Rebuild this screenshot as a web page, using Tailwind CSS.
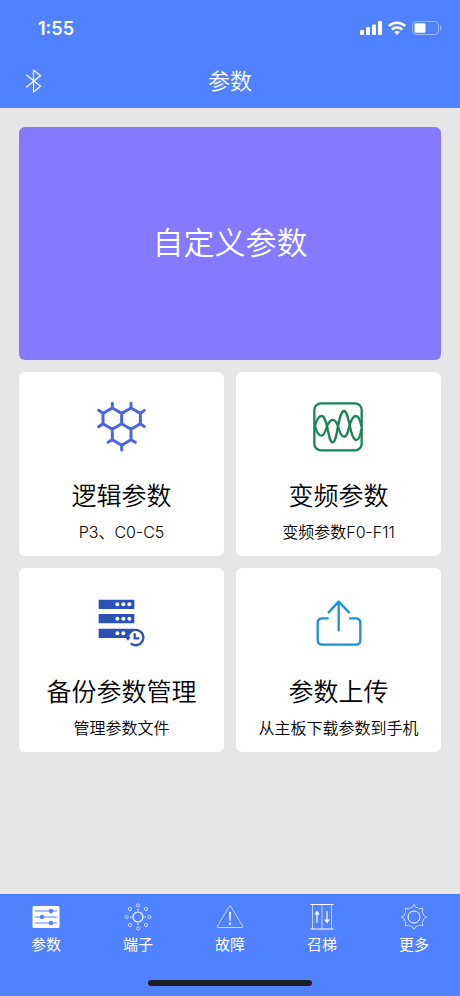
<!DOCTYPE html>
<html lang="zh-CN">
<head>
    <meta charset="UTF-8">
    <meta name="viewport" content="width=device-width, initial-scale=1">
    <title>参数</title>
    <script src="https://cdn.jsdelivr.net/npm/@tailwindcss/browser@4"></script>
</head>
<body class="min-h-screen flex flex-col bg-[#e6e6e6] font-['Inter','Noto_Sans_CJK_SC',sans-serif] text-black">
    <header class="bg-[#5081ff] text-white">
        <!-- Status bar -->
        <div class="flex h-14 items-center justify-between pl-[38px] pr-[18px]">
            <span class="pt-0.5 text-lg font-semibold">1:55</span>
            <div class="flex items-center gap-1.5">
                <svg class="h-3.5 w-[22px]" viewBox="0 0 22 14" fill="currentColor">
                    <rect x="0" y="9" width="4" height="5" rx="1"/>
                    <rect x="6" y="6" width="4" height="8" rx="1"/>
                    <rect x="12" y="3.500" width="4" height="10.500" rx="1"/>
                    <rect x="18" y="0" width="4" height="14" rx="1"/>
                </svg>
                <svg class="h-3.5 w-[18px]" viewBox="0 0 18 14" fill="none" stroke="currentColor" stroke-width="2.600">
                    <path d="M.8 5.100a11.800 11.800 0 0 1 16.400 0M3.800 8.600a7.500 7.500 0 0 1 10.400 0"/>
                    <path d="M9 14 6.200 11a4 4 0 0 1 5.600 0z" fill="currentColor" stroke="none"/>
                </svg>
                <svg class="h-3.5 w-[30px]" viewBox="0 0 30 14" fill="none">
                    <rect x=".5" y=".5" width="26" height="13" rx="3.500" stroke="#fff" stroke-opacity=".45"/>
                    <rect x="2.500" y="2.300" width="11" height="9.400" rx="1.500" fill="#fff"/>
                    <path d="M28 4.500c2 .8 2 4.200 0 5z" fill="#fff" fill-opacity=".5"/>
                </svg>
            </div>
        </div>
        <!-- Title bar -->
        <div class="grid h-13 grid-cols-[1fr_auto_1fr] items-center px-6 pb-0.5">
            <button type="button" aria-label="蓝牙" class="w-5">
                <svg class="h-6 w-5" viewBox="0 0 20 24" fill="none" stroke="currentColor" stroke-width="1.200" stroke-linejoin="round" stroke-linecap="round">
                    <path d="M2.500 6 16.500 17.300 9.500 23V1l7 5.700L2.500 18"/>
                </svg>
            </button>
            <h1 class="text-[22px] leading-8 font-[350]">参数</h1>
        </div>
    </header>

    <main class="grid flex-1 grid-cols-2 content-start gap-3 px-[19px] pt-[19px]">
        <a href="#custom" class="col-span-2 flex h-[233px] items-center justify-center rounded-md bg-[#8579ff] text-[31px] font-[350] text-white">自定义参数</a>

        <a href="#logic" class="flex flex-col items-center rounded-md bg-white pt-[18px] pb-3">
            <svg class="h-[70px] w-[75px]" viewBox="-4 0 225 210" fill="none" stroke="#4a67df" stroke-width="9" stroke-linecap="round" stroke-linejoin="round">
                <path d="M81 54l28 16v31l-28 17-28-17V70zM137 54l28 16v31l-28 17-28-17V70zM109 101l28 17v31l-28 17-28-17v-31z"/>
                <path d="M81 54V40M137 54V40M53 70 40 61M165 70l12-9M53 101l-13 9M165 101l12 9M81 149l-13 8M137 149l13 8M109 166v14"/>
            </svg>
            <h2 class="mt-5 text-[25px] leading-8 font-[350]">逻辑参数</h2>
            <p class="mt-2 text-base font-[350]">P3、C0-C5</p>
        </a>

        <a href="#frequency" class="flex flex-col items-center rounded-md bg-white pt-[18px] pb-3">
            <svg class="h-[70px] w-[75px]" viewBox="4 0 225 210" fill="none" stroke="#1a8455" stroke-width="7">
                <rect x="44" y="40" width="142" height="141" rx="20"/>
                <path d="M46 108C51 88 59 78 66 78 74 78 78 93 82 108 87 133 91 157 99 157 107 157 111 133 115 108 120 85 125 63 133 63 141 63 145 83 150 105 155 132 161 150 170 150 177 150 182 136 185 118"/>
                <path d="M46 108C51 127 57 137 65 137 73 137 78 123 82 108 87 97 92 90 99 90 106 90 111 97 115 108 120 128 125 140 133 140 141 140 145 126 150 105 155 88 161 78 169 78 177 78 182 92 185 108"/>
            </svg>
            <h2 class="mt-5 text-[25px] leading-8 font-[350]">变频参数</h2>
            <p class="mt-2 text-base font-[350]">变频参数F0-F11</p>
        </a>

        <a href="#backup" class="flex flex-col items-center rounded-md bg-white pt-[18px] pb-3">
            <svg class="h-[70px] w-[75px]" viewBox="-4 -6 225 210">
                <path d="M40 35h107v28H40zM40 78h107v28H40zM40 122h107v28H40z" fill="#2b52b4"/>
                <g fill="#fff">
                    <circle cx="96" cy="49" r="6"/><circle cx="114" cy="49" r="6"/><circle cx="132" cy="49" r="6"/>
                    <circle cx="96" cy="92" r="6"/><circle cx="114" cy="92" r="6"/><circle cx="132" cy="92" r="6"/>
                    <circle cx="96" cy="136" r="6"/><circle cx="114" cy="136" r="6"/>
                    <circle cx="151" cy="149" r="21"/>
                </g>
                <path d="M128 149a23 23 0 1 1 8 17M148 136v15h14" fill="none" stroke="#2b52b4" stroke-width="7"/>
                <path d="M119 147h17l-8 11z" fill="#2b52b4"/>
            </svg>
            <h2 class="mt-5 text-[25px] leading-8 font-[350]">备份参数管理</h2>
            <p class="mt-2 text-base font-[350]">管理参数文件</p>
        </a>

        <a href="#upload" class="flex flex-col items-center rounded-md bg-white pt-[18px] pb-3">
            <svg class="h-[70px] w-[75px]" viewBox="4 -6 225 210" fill="none" stroke="#1b93d2" stroke-width="7" stroke-linecap="round" stroke-linejoin="round">
                <path d="M84 91H68q-14 0-14 14v51q0 14 14 14h100q14 0 14-14v-51q0-14-14-14h-17"/>
                <path d="M117 127V41M87 73l30-32 31 32"/>
            </svg>
            <h2 class="mt-5 text-[25px] leading-8 font-[350]">参数上传</h2>
            <p class="mt-2 text-base font-[350]">从主板下载参数到手机</p>
        </a>
    </main>

    <footer class="bg-[#5081ff] text-white">
        <nav class="grid h-[86px] grid-cols-5 pt-[7px] text-[15px] leading-5">
            <a href="#params" class="flex flex-col items-center gap-0.5">
                <svg class="h-8 w-8" viewBox="0 0 32 32">
                    <rect x="2.500" y="5" width="27" height="22" rx="1.500" fill="#fff"/>
                    <path d="M5 10h22M5 16h22M5 22h22" stroke="#5081ff"/>
                    <g fill="#5081ff"><circle cx="21" cy="10" r="2.300"/><circle cx="12" cy="16" r="2.300"/><circle cx="21" cy="22" r="2.300"/></g>
                </svg>
                参数
            </a>
            <a href="#terminals" class="flex flex-col items-center gap-0.5">
                <svg class="h-8 w-8" viewBox="0 0 32 32" fill="none" stroke="#fff" stroke-width=".8">
                    <circle cx="16" cy="16" r="5" stroke-width="1.200"/>
                    <g stroke-opacity=".85">
                        <circle cx="16" cy="4.500" r="1.600"/><circle cx="16" cy="27.500" r="1.600"/>
                        <circle cx="4.500" cy="16" r="1.600"/><circle cx="27.500" cy="16" r="1.600"/>
                        <circle cx="8" cy="8" r="1.600"/><circle cx="24" cy="8" r="1.600"/>
                        <circle cx="8" cy="24" r="1.600"/><circle cx="24" cy="24" r="1.600"/>
                    </g>
                    <path d="M16 8v1.500M16 22.500V24M8 16h1.500M22.500 16H24" stroke-width="1.200"/>
                </svg>
                端子
            </a>
            <a href="#faults" class="flex flex-col items-center gap-0.5">
                <svg class="h-8 w-8" viewBox="0 0 32 32" fill="none" stroke="#fff">
                    <path d="M15.200 5.400 3.400 25.200q-.6 1.300.8 1.300h23.600q1.400 0 .8-1.300L16.800 5.400q-.8-1.200-1.600 0z" stroke-width=".8" stroke-opacity=".85"/>
                    <path d="M15 11h2l-.4 9h-1.200z" fill="#fff" stroke="none"/>
                    <circle cx="16" cy="22.700" r="1.200" fill="#fff" stroke="none"/>
                </svg>
                故障
            </a>
            <a href="#call" class="flex flex-col items-center gap-0.5">
                <svg class="h-8 w-8" viewBox="0 0 32 32" fill="none" stroke="#fff">
                    <path d="M4.500 3.500h23M4.500 28h23"/>
                    <path d="M6.500 4v24M16 4v24M25.500 4v24" stroke-width=".8" stroke-opacity=".85"/>
                    <path d="M11 22V11M21 10v11" stroke-width="1.200"/>
                    <path d="m8.300 13.500 2.700-4 2.700 4zM18.300 18.500l2.700 4 2.700-4z" fill="#fff" stroke="none"/>
                </svg>
                召梯
            </a>
            <a href="#more" class="flex flex-col items-center gap-0.5">
                <svg class="h-8 w-8" viewBox="0 0 32 32" fill="none" stroke="#fff" stroke-linejoin="round">
                    <circle cx="16" cy="16" r="6"/>
                    <path d="M14.200 6.300 16 3.500l1.800 2.800q2 .4 3.700 1.500l3.300-.6-.6 3.300q1.100 1.700 1.500 3.700l2.800 1.800-2.800 1.800q-.4 2-1.500 3.700l.6 3.300-3.300-.6q-1.700 1.100-3.700 1.500L16 28.500l-1.800-2.800q-2-.4-3.700-1.500l-3.300.6.6-3.300q-1.100-1.700-1.500-3.700L3.500 16l2.800-1.800q.4-2 1.500-3.700l-.6-3.300 3.300.6q1.700-1.100 3.700-1.500z" stroke-width=".8" stroke-opacity=".85"/>
                </svg>
                更多
            </a>
        </nav>
        <!-- Home indicator -->
        <div class="mx-auto mb-2.5 h-1.5 w-[164px] rounded-full bg-[#1d1e22]"></div>
    </footer>
</body>
</html>
